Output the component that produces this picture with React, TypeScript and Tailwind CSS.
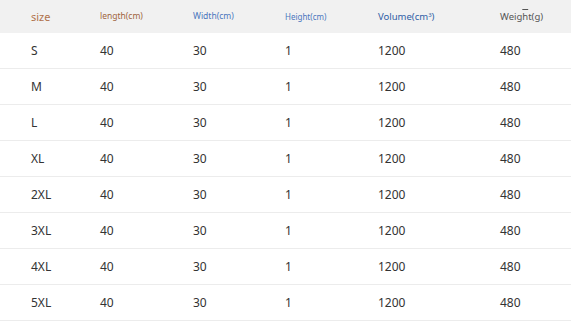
const rows = ["S", "M", "L", "XL", "2XL", "3XL", "4XL", "5XL"];

const cols = "grid grid-cols-[69px_93px_92px_93px_122px_1fr] pl-[31px] items-center";

export default function App() {
  return (
    <div className="w-[571px] h-[322px] bg-white overflow-hidden font-['Noto_Sans','Open_Sans',sans-serif]">
      <div className={`${cols} h-[33px] bg-[#f1f1f1]`}>
        <span className="text-[11px] text-[#b0714c] leading-none">size</span>
        <span className="text-[8.5px] text-[#9f6440] leading-none">length(cm)</span>
        <span className="text-[8.5px] text-[#4a76bd] leading-none">Width(cm)</span>
        <span className="text-[8px] text-[#4a76bd] leading-none">Height(cm)</span>
        <span className="text-[9.5px] text-[#2f5ea6] leading-none">
          Volume(cm<sup className="text-[6px]">3</sup>)
        </span>
        <span className="text-[9.5px] text-[#555] leading-none">
          Weig<span className="overline">h</span>t(g)
        </span>
      </div>
      {rows.map((s) => (
        <div key={s} className={`${cols} h-[36px] border-b border-[#ececec] text-[12px] text-[#333]`}>
          <span>{s}</span>
          <span>40</span>
          <span>30</span>
          <span>1</span>
          <span>1200</span>
          <span>480</span>
        </div>
      ))}
    </div>
  );
}
